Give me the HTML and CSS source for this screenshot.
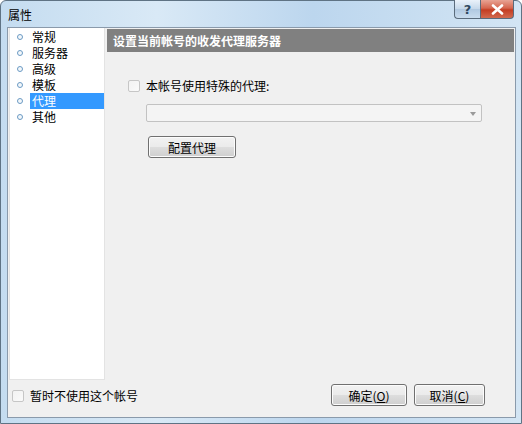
FILE: index.html
```html
<!DOCTYPE html>
<html lang="zh-CN">
<head>
<meta charset="utf-8">
<title>属性</title>
<link rel="stylesheet" href="styles.css">
</head>
<body>
<div class="window">
  <div class="titlebar">
    <span class="title">属性</span>
    <div class="caption-btns">
      <div class="cbtn help">?</div>
      <div class="cbtn close">
        <svg width="13" height="11" viewBox="0 0 13 11"><path d="M2 1.5 L11 9.5 M11 1.5 L2 9.5" stroke="#fff" stroke-width="2.6" stroke-linecap="round"/></svg>
      </div>
    </div>
  </div>
  <div class="client">
    <div class="main">
      <ul class="nav">
        <li><span class="dot"></span><span class="lbl">常规</span></li>
        <li><span class="dot"></span><span class="lbl">服务器</span></li>
        <li><span class="dot"></span><span class="lbl">高级</span></li>
        <li><span class="dot"></span><span class="lbl">模板</span></li>
        <li class="sel"><span class="dot"></span><span class="lbl">代理</span></li>
        <li><span class="dot"></span><span class="lbl">其他</span></li>
      </ul>
      <div class="content">
        <div class="header">设置当前帐号的收发代理服务器</div>
        <div class="body">
          <label class="check-row"><span class="box"></span><span>本帐号使用特殊的代理:</span></label>
          <div class="combo"><span class="arrow"></span></div>
          <button class="btn cfg">配置代理</button>
        </div>
      </div>
    </div>
    <div class="footer">
      <label class="check-row small"><span class="box"></span><span>暂时不使用这个帐号</span></label>
      <div class="actions">
        <button class="btn ok">确定(<u>O</u>)</button>
        <button class="btn cancel">取消(<u>C</u>)</button>
      </div>
    </div>
  </div>
</div>
</body>
</html>
```

FILE: styles.css
```css
* { box-sizing: border-box; }
html, body { margin: 0; padding: 0; }
body {
  width: 522px; height: 424px; overflow: hidden;
  font-family: "Noto Sans CJK SC", "DejaVu Sans", sans-serif;
  font-size: 12px; color: #000;
  background: #fff;
}
.window {
  width: 522px; height: 424px;
  border: 1px solid #5f7384;
  border-radius: 6px 6px 0 0;
  background: linear-gradient(90deg, #c4dcf0 0%, #d9e9f6 30%, #bcd6ee 60%, #d3e5f4 100%);
  display: flex; flex-direction: column;
  padding: 0 5px 5px 6px;
}
.titlebar {
  height: 26px; flex: none;
  display: flex; align-items: flex-start; justify-content: space-between;
}
.title { margin-top: 5px; margin-left: 1px; font-size: 12px; color: #000; }
.caption-btns { display: flex; margin-right: 2px; margin-top: -1px; }
.cbtn {
  height: 19px; border: 1px solid #5a6b7c; border-top: none;
  display: flex; align-items: center; justify-content: center;
}
.help {
  width: 26px; border-radius: 0 0 0 4px; border-right: none;
  background: linear-gradient(#eaf2fa, #c5d8ea 50%, #b0c8e0 51%, #c9dcee);
  color: #2f4860; font-weight: bold; font-size: 13px; font-family: "DejaVu Sans", sans-serif;
}
.close {
  width: 34px; border-radius: 0 0 4px 0;
  background: linear-gradient(#e8a394, #d5664f 45%, #c43d22 55%, #d26a4f);
}
.client {
  flex: 1;
  border: 1px solid #8a9aab;
  background: #f0f0f0;
  display: flex; flex-direction: column;
}
.main { flex: 1; display: flex; padding: 0 1px; }
.nav {
  list-style: none; margin: 0; padding: 1px 0 0 0;
  width: 96px; height: 352px; background: #fff;
  border: 1px solid #e3e3e3; border-top: none;
}
.nav li { height: 16px; display: flex; align-items: center; }
.dot {
  width: 6px; height: 6px; border-radius: 50%;
  border: 1px solid #6b9ac4; margin-left: 7px; margin-right: 7px; background: #f4f8fb;
}
.lbl { padding: 0 2px; height: 16px; line-height: 16px; }
.nav li.sel .lbl { background: #3399ff; color: #fff; flex: 1; }
.content { flex: 1; padding: 1px 0 0 2px; }
.header {
  height: 23px; background: #808080; color: #fff; font-weight: bold;
  line-height: 23px; padding-left: 6px; font-size: 12px;
}
.body { padding: 25px 0 0 21px; display: flex; flex-direction: column; align-items: flex-start; }
.check-row { display: flex; align-items: center; gap: 6px; }
.box {
  width: 12px; height: 12px; border: 1px solid #c6c6c6; border-radius: 2px;
  background: linear-gradient(135deg, #f2f2f2, #fafafa);
}
.combo {
  margin: 10px 0 0 18px; width: 336px; height: 18px;
  border: 1px solid #c2c2c2; border-radius: 2px; background: #f4f4f4;
  position: relative;
}
.arrow {
  position: absolute; right: 5px; top: 7px;
  border-left: 3px solid transparent; border-right: 3px solid transparent; border-top: 4px solid #9a9a9a;
}
.btn {
  font-family: inherit; font-size: 12px; color: #000;
  border: 1px solid #707070; border-radius: 3px;
  background: linear-gradient(#f2f2f2 0%, #ebebeb 48%, #dddddd 52%, #cfcfcf 100%);
  box-shadow: inset 0 0 0 1px #fcfcfc;
  padding: 0; height: 22px;
}
.cfg { margin: 14px 0 0 20px; width: 88px; }
.footer {
  height: 37px; flex: none; display: flex; align-items: flex-start; justify-content: space-between;
  padding: 4px 30px 0 4px;
}
.check-row.small { margin-top: 3px; }
.actions { display: flex; gap: 7px; }
.ok { width: 76px; }
.cancel { width: 71px; }
```
